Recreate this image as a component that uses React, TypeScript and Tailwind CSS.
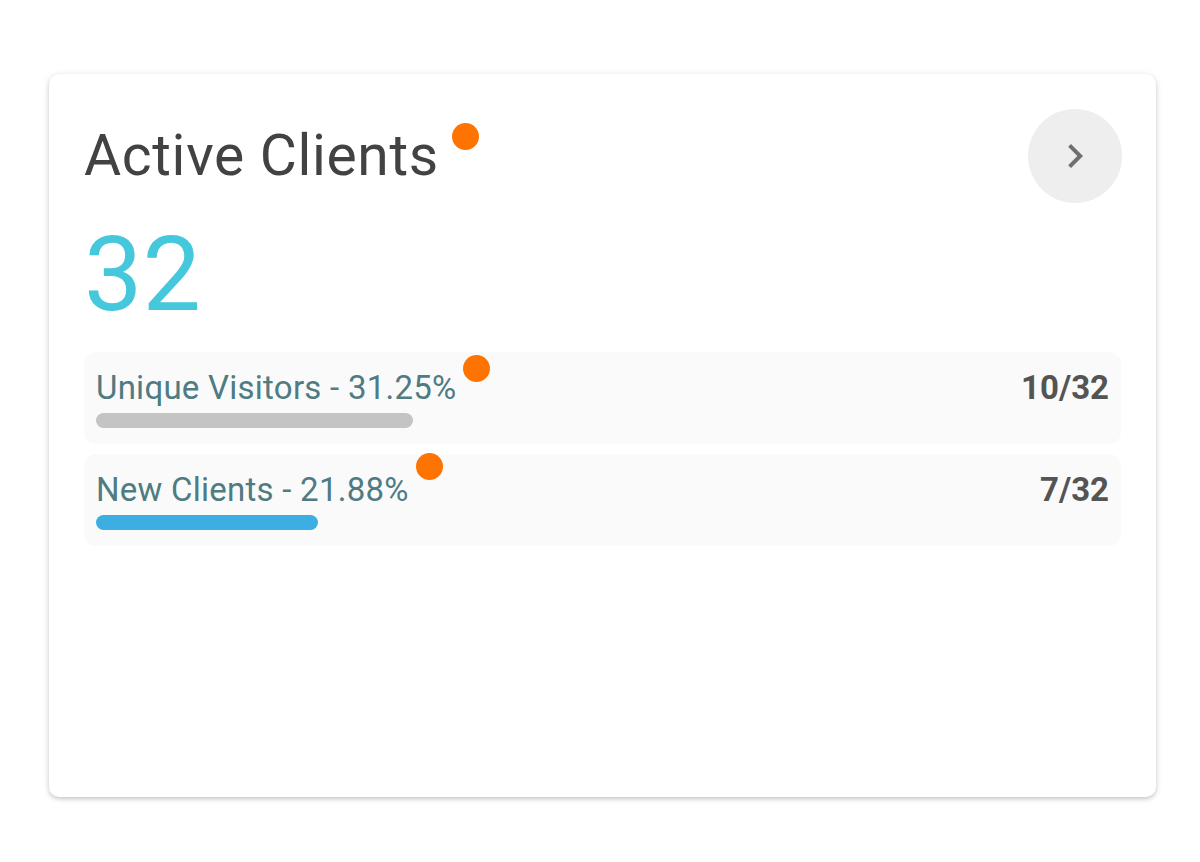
import { ChevronRight } from "lucide-react";

interface Stat {
  label: string;
  pct: number;
  value: string;
  barColor: string;
  dotTop: string;
}

const stats: Stat[] = [
  { label: "Unique Visitors", pct: 31.25, value: "10/32", barColor: "bg-[#c4c4c4]", dotTop: "top-[-13px]" },
  { label: "New Clients", pct: 21.88, value: "7/32", barColor: "bg-[#3daee2]", dotTop: "top-[-17px]" },
];

function Dot({ className }: { className: string }) {
  return <span className={`absolute h-[27px] w-[27px] rounded-full bg-[#ff7300] ${className}`} />;
}

export default function App() {
  return (
    <div className="min-h-[862px] bg-white pt-[74px] pl-[49px] font-['Roboto',sans-serif]">
      <div className="h-[723px] w-[1107px] rounded-[10px] bg-white px-[35px] pt-[35px] shadow-[0_2px_4px_rgba(0,0,0,0.18),0_1px_10px_rgba(0,0,0,0.07)]">
        <div className="flex h-[94px] items-center justify-between">
          <h1 className="relative text-[57px] leading-[66px] font-normal tracking-[0.65px] text-[#424242]">
            Active Clients
            <Dot className="left-[calc(100%+13px)] top-0" />
          </h1>
          <button className="mr-[-1px] flex h-[94px] w-[94px] items-center justify-center rounded-full bg-[#eeeeee] text-[#6f6f6f]">
            <svg width="48" height="48" viewBox="0 0 24 24" fill="currentColor">
              <path d="M10 6L8.59 7.41 13.17 12l-4.58 4.59L10 18l6-6z" />
            </svg>
          </button>
        </div>

        <div className="mt-[20px] text-[104px] leading-none font-normal text-[#45c7dc]">32</div>

        <div className="mt-[25px] flex flex-col gap-[10px]">
          {stats.map((s) => (
            <div key={s.label} className="rounded-[12px] bg-[#fafafa] px-3 pt-[16px] pb-[16px]">
              <div className="flex items-start justify-between">
                <span className="relative text-[33px] leading-[40px] tracking-[0.25px] text-[#4f7b82]">
                  {s.label} - {s.pct.toFixed(2)}%
                  <Dot className={`left-[calc(100%+7px)] ${s.dotTop}`} />
                </span>
                <span className="text-[33px] leading-[40px] font-bold text-[#545454]">{s.value}</span>
              </div>
              <div className="mt-[5px] h-[15px] w-full">
                <div className={`h-full rounded-full ${s.barColor}`} style={{ width: `${s.pct}%` }} />
              </div>
            </div>
          ))}
        </div>
      </div>
    </div>
  );
}
